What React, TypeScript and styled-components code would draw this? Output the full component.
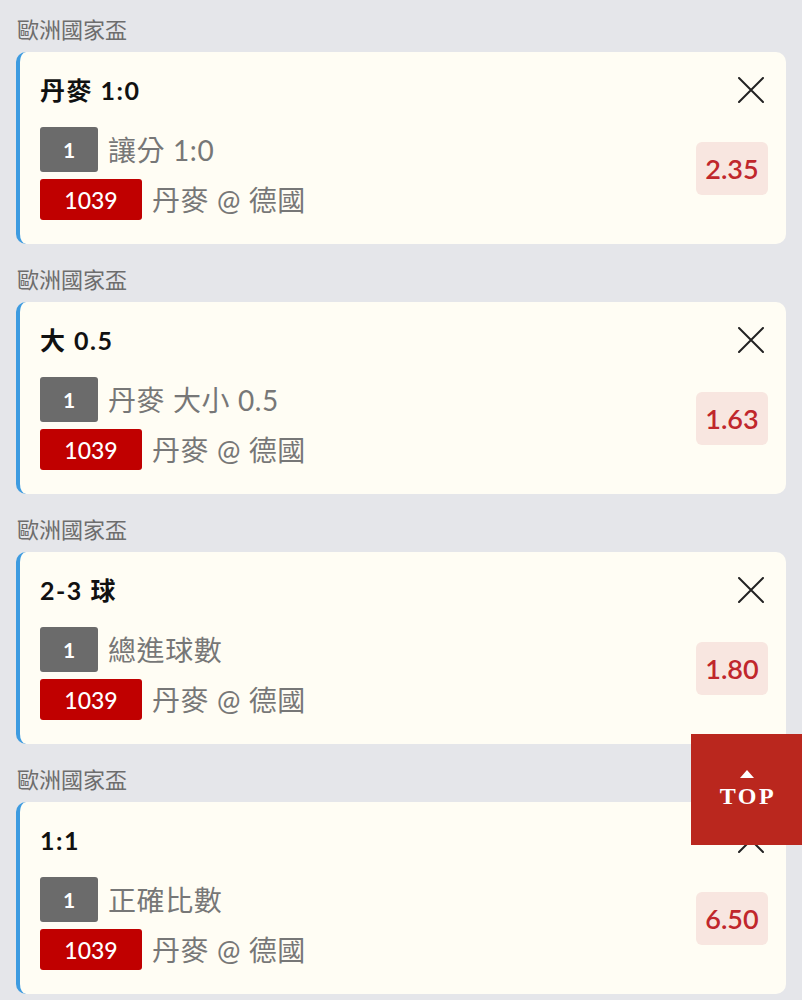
import React from "react";
import styled, { createGlobalStyle } from "styled-components";

const GlobalStyle = createGlobalStyle`
  html, body {
    margin: 0;
    padding: 0;
    background: #e5e6ea;
  }
  body {
    font-family: Lato, "Noto Sans CJK TC", "Noto Sans", sans-serif;
  }
`;

const Page = styled.div`
  padding: 0 16px;
  background: #e5e6ea;
  min-height: 1000px;
`;

const Section = styled.section`
  display: flex;
  flex-direction: column;
  margin-bottom: 6px;
`;

const League = styled.div`
  padding: 16px 0 12px 1px;
  height: 24px;
  line-height: 24px;
  font-size: 22px;
  color: #6d6d6d;
  font-family: "Noto Sans CJK TC", sans-serif;
`;

const Card = styled.div`
  background: #fffdf4;
  border-left: 4px solid #3d9be0;
  border-radius: 10px;
  padding: 24px 18px 24px 20px;
  display: flex;
  flex-direction: column;
  gap: 23px;
`;

const Header = styled.div`
  display: flex;
  align-items: center;
  justify-content: space-between;
  height: 28px;
`;

const Title = styled.div`
  font-size: 25px;
  font-weight: 700;
  letter-spacing: 1.5px;
  color: #111;
  line-height: 28px;
`;

const CloseButton = styled.button`
  border: none;
  background: transparent;
  padding: 0;
  margin-right: 4px;
  width: 26px;
  height: 26px;
  display: flex;
  align-items: center;
  justify-content: center;
`;

const Body = styled.div`
  display: flex;
  align-items: center;
  justify-content: space-between;
`;

const Rows = styled.div`
  display: flex;
  flex-direction: column;
  gap: 7px;
`;

const Row = styled.div`
  display: flex;
  align-items: center;
  gap: 10px;
`;

const Badge = styled.span<{ $tone: "gray" | "red" }>`
  display: inline-flex;
  align-items: center;
  justify-content: center;
  color: #fff;
  border-radius: 3px;
  font-family: Lato, sans-serif;
  ${(p) =>
    p.$tone === "gray"
      ? `
    background: #6b6b6b;
    width: 58px;
    height: 45px;
    font-size: 21px;
    font-weight: 700;
  `
      : `
    background: #c00000;
    width: 102px;
    height: 41px;
    font-size: 23px;
    font-weight: 500;
  `}
`;

const RowText = styled.span`
  font-size: 28px;
  letter-spacing: 0.6px;
  color: #777;
  line-height: 1;
`;

const Odds = styled.div`
  width: 72px;
  height: 53px;
  margin-bottom: 10px;
  background: #f8e6e0;
  border-radius: 6px;
  display: flex;
  align-items: center;
  justify-content: center;
  color: #c0272c;
  font-size: 27px;
  font-weight: 600;
`;

const TopButton = styled.button`
  position: fixed;
  left: 691px;
  top: 734px;
  width: 111px;
  height: 111px;
  border: none;
  padding: 0;
  background: #ba271e;
  color: #fff;
  display: flex;
  flex-direction: column;
  align-items: center;
  justify-content: center;
  gap: 8px;
`;

const Arrow = styled.span`
  width: 0;
  height: 0;
  border-left: 7px solid transparent;
  border-right: 7px solid transparent;
  border-bottom: 8px solid #fff;
  margin-left: 1px;
  margin-top: -4px;
`;

const TopLabel = styled.span`
  font-family: "Liberation Serif", serif;
  font-weight: 700;
  font-size: 24px;
  letter-spacing: 2.5px;
  line-height: 20px;
  margin-left: 3px;
`;

const CloseIcon = () => (
  <svg width="26" height="26" viewBox="0 0 26 26">
    <path d="M1 1 L25 25 M25 1 L1 25" stroke="#222" strokeWidth="2" strokeLinecap="round" />
  </svg>
);

type Bet = { title: string; market: string; odds: string };

const bets: Bet[] = [
  { title: "丹麥 1:0", market: "讓分 1:0", odds: "2.35" },
  { title: "大 0.5", market: "丹麥 大小 0.5", odds: "1.63" },
  { title: "2-3 球", market: "總進球數", odds: "1.80" },
  { title: "1:1", market: "正確比數", odds: "6.50" },
];

export default function App() {
  return (
    <>
      <GlobalStyle />
      <Page>
        {bets.map((b) => (
          <Section key={b.title}>
            <League>歐洲國家盃</League>
            <Card>
              <Header>
                <Title>{b.title}</Title>
                <CloseButton aria-label="close">
                  <CloseIcon />
                </CloseButton>
              </Header>
              <Body>
                <Rows>
                  <Row>
                    <Badge $tone="gray">1</Badge>
                    <RowText>{b.market}</RowText>
                  </Row>
                  <Row>
                    <Badge $tone="red">1039</Badge>
                    <RowText>丹麥 @ 德國</RowText>
                  </Row>
                </Rows>
                <Odds>{b.odds}</Odds>
              </Body>
            </Card>
          </Section>
        ))}
      </Page>
      <TopButton>
        <Arrow />
        <TopLabel>TOP</TopLabel>
      </TopButton>
    </>
  );
}
